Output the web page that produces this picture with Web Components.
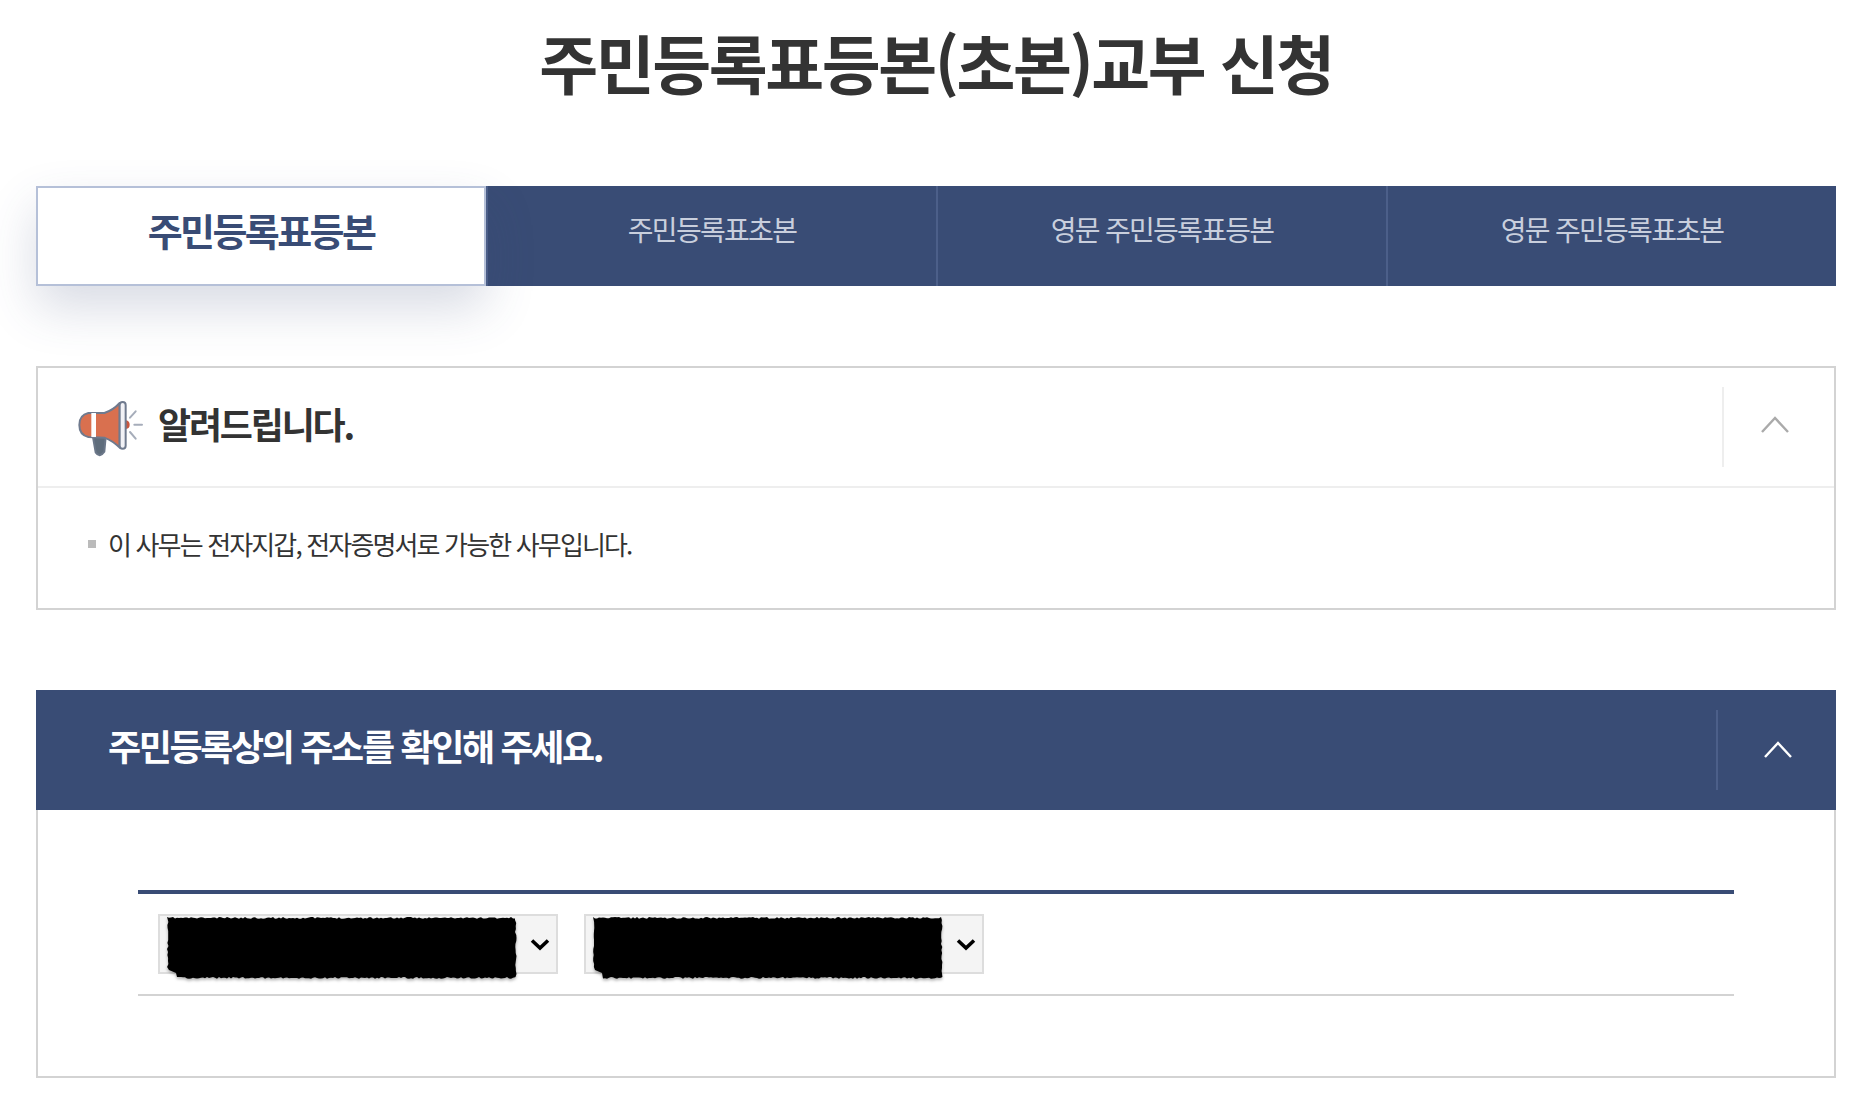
<!DOCTYPE html>
<html lang="ko">
<head>
<meta charset="utf-8">
<title>주민등록표등본(초본)교부 신청</title>
<style>
  html, body { margin: 0; background: #fff; }
  body { font-family: "Noto Sans CJK KR", "Noto Sans", sans-serif; color: #333; }
  .page { width: 1800px; margin: 0 0 0 36px; }
</style>
</head>
<body>
<template id="page-title-tpl">
  <style>
    :host { display: block; height: 186px; text-align: center; }
    h1 { margin: 0; padding-top: 18px; font-size: 64px; line-height: 86px; font-weight: 700; letter-spacing: -2.4px; color: #333; }
  </style>
  <h1><slot></slot></h1>
</template>

<template id="tab-bar-tpl">
  <style>
    :host { display: flex; height: 100px; background: #394c75; }
  </style>
  <slot></slot>
</template>

<template id="tab-item-tpl">
  <style>
    :host { display: flex; flex: none; width: 450px; align-items: center; justify-content: center; box-sizing: border-box; padding-bottom: 14px; font-size: 28px; letter-spacing: -1.7px; color: #c9cfdd; border-left: 2px solid #4c5f89; }
    :host(:first-child) { border-left: 0; }
    :host([active]) { position: relative; background: #fff; color: #394c75; font-size: 38px; font-weight: 700; letter-spacing: -2.6px; border: 2px solid #b5c0d8; padding-bottom: 14px; box-shadow: 0 22px 50px rgba(58, 77, 118, .2); }
  </style>
  <slot></slot>
</template>

<template id="notice-box-tpl">
  <style>
    :host { display: block; box-sizing: border-box; height: 244px; margin-top: 80px; border: 2px solid #d3d3d3; }
    header { display: flex; align-items: center; box-sizing: border-box; height: 120px; padding-left: 39px; border-bottom: 2px solid #eee; }
    svg.icon { flex: none; width: 70px; height: 60px; margin-right: 11px; filter: blur(.4px); }
    h2 { flex: 1; margin: 0; padding-bottom: 8px; font-size: 36px; font-weight: 700; letter-spacing: -2.2px; color: #333; }
    .toggle { display: flex; align-items: center; justify-content: center; flex: none; box-sizing: border-box; width: 112px; height: 80px; padding: 0 8px 6px 0; border-left: 2px solid #eee; }
    .body { padding: 36px 50px; }
  </style>
  <header>
    <svg class="icon" viewBox="50 20 210 180" aria-hidden="true">
      <path d="M98 140 L136 140 L132 184 Q118 204 106 186 Z" fill="#5f6d7c" stroke="#6b7789" stroke-width="6" stroke-linejoin="round"/>
      <path d="M84 68 L132 68 Q158 60 178 38 L178 172 Q158 152 132 142 L84 140 Q57 134 57 104 Q57 74 84 68 Z" fill="#d9704f" stroke="#6f7a8e" stroke-width="6" stroke-linejoin="round"/>
      <rect x="93" y="68" width="14" height="72" fill="#fff"/>
      <path d="M197 90 Q208 92 208 103 Q208 114 197 116 Z" fill="#c9573f"/>
      <rect x="178" y="35" width="18" height="140" rx="9" fill="#f2f2f6" stroke="#6f7a8e" stroke-width="6"/>
      <path d="M209 82 L226 63 M222 103 L245 103 M209 125 L226 145" stroke="#a6adba" stroke-width="6" stroke-linecap="round" fill="none"/>
    </svg>
    <h2><slot name="title"></slot></h2>
    <div class="toggle">
      <svg width="30" height="18" viewBox="0 0 30 18" aria-hidden="true"><path d="M2 17 L15 3 L28 17" fill="none" stroke="#aaa" stroke-width="2.4"/></svg>
    </div>
  </header>
  <div class="body"><slot></slot></div>
</template>

<template id="bullet-item-tpl">
  <style>
    :host { display: flex; align-items: center; font-size: 26px; line-height: 40px; letter-spacing: -1.85px; color: #333; }
    i { flex: none; width: 8px; height: 8px; margin-right: 12px; background: #bbb; }
  </style>
  <i></i><span><slot></slot></span>
</template>

<template id="address-panel-tpl">
  <style>
    :host { display: block; margin-top: 80px; }
    header { display: flex; align-items: center; box-sizing: border-box; height: 120px; padding-left: 72px; background: #394c75; }
    h2 { flex: 1; margin: 0; padding-bottom: 11px; font-size: 36px; font-weight: 700; letter-spacing: -2.35px; color: #fff; }
    .toggle { display: flex; align-items: center; justify-content: center; flex: none; box-sizing: border-box; width: 120px; height: 80px; padding: 0 0 2px 2px; border-left: 2px solid #4c5f89; }
    .body { box-sizing: border-box; height: 268px; padding: 80px 100px 0 100px; border: 2px solid #d3d3d3; border-top: 0; }
    .table { height: 106px; box-sizing: border-box; border-top: 4px solid #394c75; border-bottom: 2px solid #d3d3d3; padding: 20px 20px 0; display: flex; gap: 26px; align-items: flex-start; }
  </style>
  <header>
    <h2><slot name="title"></slot></h2>
    <div class="toggle">
      <svg width="30" height="18" viewBox="0 0 30 18" aria-hidden="true"><path d="M2 17 L15 3 L28 17" fill="none" stroke="#fff" stroke-width="2.4"/></svg>
    </div>
  </header>
  <div class="body"><div class="table"><slot></slot></div></div>
</template>

<template id="masked-select-tpl">
  <style>
    :host { display: block; position: relative; width: 400px; height: 60px; }
    select { display: block; width: 100%; height: 100%; box-sizing: border-box; background: #f4f4f4; border: 2px solid #ddd; border-radius: 0; appearance: none; font-size: 24px; color: #000; }
    svg { position: absolute; }
    .arrow { right: 8px; top: 24px; width: 20px; height: 13px; }
    .mask { left: 9px; top: 3px; width: 352px; height: 66px; overflow: visible; filter: drop-shadow(0 2px 1.5px rgba(0,0,0,.3)); }
  </style>
  <select aria-label="주소"><option></option></select>
  <svg class="arrow" viewBox="0 0 20 13" aria-hidden="true"><path d="M2 2.5 L10 10 L18 2.5" fill="none" stroke="#000" stroke-width="3.6"/></svg>
  <svg class="mask" viewBox="0 0 352 66" aria-hidden="true"><path fill="#000"></path></svg>
</template>

<script>
  function shadowFrom(id) {
    return class extends HTMLElement {
      constructor() {
        super();
        this.attachShadow({ mode: "open" });
        this.shadowRoot.appendChild(document.getElementById(id).content.cloneNode(true));
      }
    };
  }

  customElements.define("page-title", shadowFrom("page-title-tpl"));
  customElements.define("tab-bar", shadowFrom("tab-bar-tpl"));
  customElements.define("tab-item", shadowFrom("tab-item-tpl"));
  customElements.define("notice-box", shadowFrom("notice-box-tpl"));
  customElements.define("bullet-item", shadowFrom("bullet-item-tpl"));
  customElements.define("address-panel", shadowFrom("address-panel-tpl"));

  class MaskedSelect extends shadowFrom("masked-select-tpl") {
    connectedCallback() {
      // rough marker edge, seeded so each render is the same
      let seed = Number(this.getAttribute("seed")) || 7;
      const rnd = () => (seed = (seed * 16807) % 2147483647) / 2147483647;
      const pts = [];
      for (let x = 0; x <= 348; x += 2) pts.push([x, rnd() * 1.8]);
      for (let y = 3; y <= 60; y += 3) pts.push([348 + rnd() * 1.5, y]);
      for (let x = 348; x >= 10; x -= 2) pts.push([x, 60 + rnd() * 1.8]);
      pts.push([9, 56], [2, 53]);
      for (let y = 50; y >= 3; y -= 3) pts.push([rnd() * 1.5, y]);
      const d = "M" + pts.map(p => p[0].toFixed(1) + " " + p[1].toFixed(1)).join("L") + "Z";
      this.shadowRoot.querySelector(".mask path").setAttribute("d", d);
    }
  }
  customElements.define("masked-select", MaskedSelect);
</script>

<div class="page">
  <page-title>주민등록표등본(초본)교부 신청</page-title>
  <tab-bar>
    <tab-item active>주민등록표등본</tab-item>
    <tab-item>주민등록표초본</tab-item>
    <tab-item>영문 주민등록표등본</tab-item>
    <tab-item>영문 주민등록표초본</tab-item>
  </tab-bar>
  <notice-box>
    <span slot="title">알려드립니다.</span>
    <bullet-item>이 사무는 전자지갑, 전자증명서로 가능한 사무입니다.</bullet-item>
  </notice-box>
  <address-panel>
    <span slot="title">주민등록상의 주소를 확인해 주세요.</span>
    <masked-select seed="11"></masked-select>
    <masked-select seed="29"></masked-select>
  </address-panel>
</div>
</body>
</html>
